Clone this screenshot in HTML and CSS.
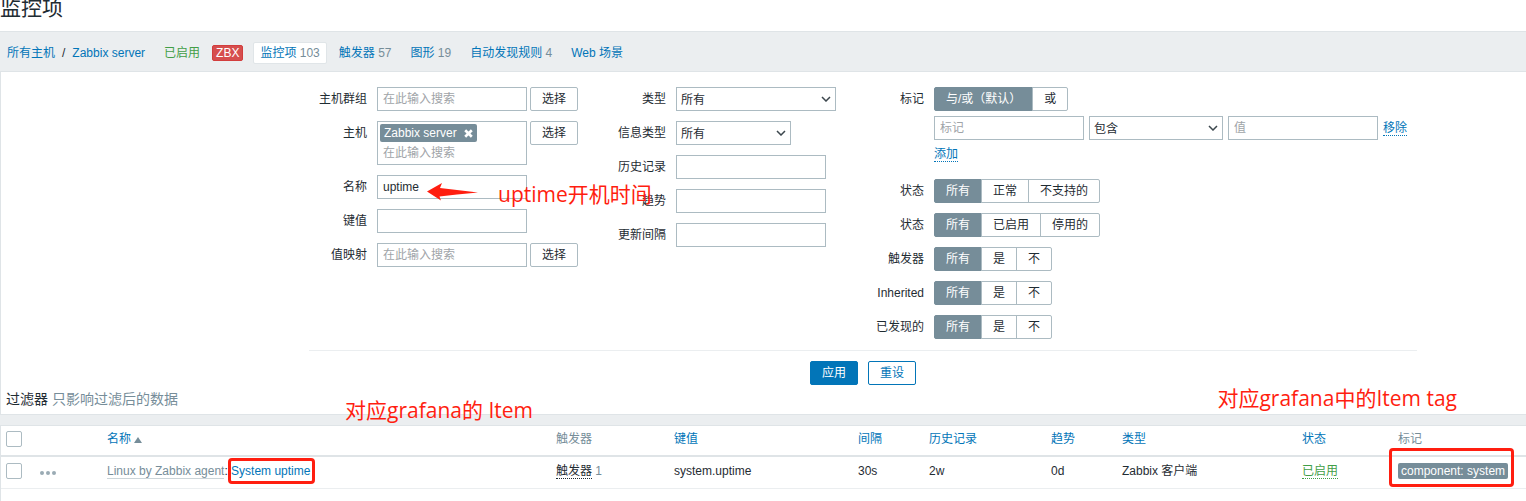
FILE: index.html
```html
<!DOCTYPE html>
<html lang="zh-CN">
<head>
<meta charset="utf-8">
<title>监控项</title>
<link rel="stylesheet" href="styles.css">
</head>
<body>
<header class="page-header"><h1>监控项</h1></header>

<nav class="host-nav">
  <a href="#">所有主机</a>
  <span class="slash">/</span>
  <a href="#">Zabbix server</a>
  <a href="#" class="enabled">已启用</a>
  <span class="zbx">ZBX</span>
  <div class="tabs">
    <a href="#" class="tab active">监控项 <span>103</span></a>
    <a href="#" class="tab">触发器 <span>57</span></a>
    <a href="#" class="tab">图形 <span>19</span></a>
    <a href="#" class="tab">自动发现规则 <span>4</span></a>
    <a href="#" class="tab">Web 场景</a>
  </div>
</nav>

<form class="filter">
  <div class="filter-form">
    <div class="filter-col">
      <div class="row"><label for="groups">主机群组</label>
        <div class="field"><input id="groups" class="text" placeholder="在此输入搜索"><button type="button" class="btn-grey">选择</button></div></div>
      <div class="row"><label for="hosts">主机</label>
        <div class="field"><div class="multiselect">
          <span class="chip">Zabbix server<button type="button" aria-label="移除"><svg viewBox="0 0 10 10"><path d="M2 2 8 8M8 2 2 8"/></svg></button></span>
          <input id="hosts" placeholder="在此输入搜索"></div><button type="button" class="btn-grey">选择</button></div></div>
      <div class="row"><label for="name">名称</label>
        <div class="field"><input id="name" class="text" value="uptime">
          <svg class="arrow" viewBox="0 0 52 18"><path d="M0 8.5 15 0 13 5 30 7 51 9.500 30 11.500 12.500 13.500 14 17.500Z"/></svg>
          <span class="note note-name">uptime开机时间</span></div></div>
      <div class="row"><label for="key">键值</label>
        <div class="field"><input id="key" class="text"></div></div>
      <div class="row"><label for="valuemap">值映射</label>
        <div class="field"><input id="valuemap" class="text" placeholder="在此输入搜索"><button type="button" class="btn-grey">选择</button></div></div>
    </div>

    <div class="filter-col">
      <div class="row"><label for="type">类型</label>
        <div class="field"><span class="select wide"><select id="type"><option>所有</option></select><svg viewBox="0 0 10 6"><path d="M1 1 5 5 9 1"/></svg></span></div></div>
      <div class="row"><label for="value-type">信息类型</label>
        <div class="field"><span class="select narrow"><select id="value-type"><option>所有</option></select><svg viewBox="0 0 10 6"><path d="M1 1 5 5 9 1"/></svg></span></div></div>
      <div class="row"><label for="history">历史记录</label>
        <div class="field"><input id="history" class="text"></div></div>
      <div class="row"><label for="trends">趋势</label>
        <div class="field"><input id="trends" class="text"></div></div>
      <div class="row"><label for="delay">更新间隔</label>
        <div class="field"><input id="delay" class="text"></div></div>
    </div>

    <div class="filter-col">
      <div class="row tags-row"><span class="label">标记</span>
        <div class="tag-filter">
          <div class="segments">
            <label><input type="radio" name="evaltype" checked><span>与/或（默认）</span></label><label><input type="radio" name="evaltype"><span>或</span></label>
          </div>
          <div class="tag-line">
            <input class="text" placeholder="标记" aria-label="标记">
            <span class="select medium"><select aria-label="运算符"><option>包含</option></select><svg viewBox="0 0 10 6"><path d="M1 1 5 5 9 1"/></svg></span>
            <input class="text" placeholder="值" aria-label="值">
            <a href="#" class="dotted">移除</a>
          </div>
          <div class="add-line"><a href="#" class="dotted">添加</a></div>
        </div></div>
      <div class="row"><span class="label">状态</span>
        <div class="segments">
          <label><input type="radio" name="state" checked><span>所有</span></label><label><input type="radio" name="state"><span>正常</span></label><label><input type="radio" name="state"><span>不支持的</span></label>
        </div></div>
      <div class="row"><span class="label">状态</span>
        <div class="segments">
          <label><input type="radio" name="status" checked><span>所有</span></label><label><input type="radio" name="status"><span>已启用</span></label><label><input type="radio" name="status"><span>停用的</span></label>
        </div></div>
      <div class="row"><span class="label">触发器</span>
        <div class="segments">
          <label><input type="radio" name="triggers" checked><span>所有</span></label><label><input type="radio" name="triggers"><span>是</span></label><label><input type="radio" name="triggers"><span>不</span></label>
        </div></div>
      <div class="row"><span class="label">Inherited</span>
        <div class="segments">
          <label><input type="radio" name="inherited" checked><span>所有</span></label><label><input type="radio" name="inherited"><span>是</span></label><label><input type="radio" name="inherited"><span>不</span></label>
        </div></div>
      <div class="row"><span class="label">已发现的</span>
        <div class="segments">
          <label><input type="radio" name="discovered" checked><span>所有</span></label><label><input type="radio" name="discovered"><span>是</span></label><label><input type="radio" name="discovered"><span>不</span></label>
        </div></div>
    </div>
  </div>
  <div class="filter-buttons">
    <button type="submit" class="btn primary">应用</button>
    <button type="reset" class="btn">重设</button>
  </div>
  <div class="subfilter">过滤器 <span>只影响过滤后的数据</span></div>
  <span class="note note-item">对应grafana的 Item</span>
  <span class="note note-tag">对应grafana中的Item tag</span>
</form>

<main class="items">
  <table>
    <colgroup><col class="c-check"><col class="c-menu"><col><col class="c-trig"><col class="c-key"><col class="c-int"><col class="c-hist"><col class="c-trend"><col class="c-type"><col class="c-status"><col class="c-tags"></colgroup>
    <thead>
      <tr>
        <th><input type="checkbox" aria-label="全选"></th>
        <th></th>
        <th><a href="#">名称<i class="sort"></i></a></th>
        <th>触发器</th>
        <th><a href="#">键值</a></th>
        <th><a href="#">间隔</a></th>
        <th><a href="#">历史记录</a></th>
        <th><a href="#">趋势</a></th>
        <th><a href="#">类型</a></th>
        <th><a href="#">状态</a></th>
        <th>标记</th>
      </tr>
    </thead>
    <tbody>
      <tr>
        <td><input type="checkbox" aria-label="System uptime"></td>
        <td><button type="button" class="dots" aria-label="菜单"><svg viewBox="0 0 16 4"><circle cx="2" cy="2" r="2"/><circle cx="8" cy="2" r="2"/><circle cx="14" cy="2" r="2"/></svg></button></td>
        <td><a href="#" class="template">Linux by Zabbix agent</a><span class="colon">: </span><a href="#" class="marked">System uptime</a></td>
        <td><a href="#" class="dotted dark">触发器</a> <span class="count">1</span></td>
        <td>system.uptime</td>
        <td>30s</td>
        <td>2w</td>
        <td>0d</td>
        <td>Zabbix 客户端</td>
        <td><a href="#" class="dotted green">已启用</a></td>
        <td><span class="tag marked">component: system</span></td>
      </tr>
    </tbody>
  </table>
</main>
</body>
</html>
```
FILE: styles.css
```css
* { box-sizing: border-box; }

body {
  margin: 0;
  min-height: 100vh;
  display: flex;
  flex-direction: column;
  overflow: hidden;
  background: #ebeef0;
  color: #1f2c33;
  font: 12px/18px "Liberation Sans", "Noto Sans CJK SC", sans-serif;
}

a { color: #0275b8; text-decoration: none; }

button, input, select { font: inherit; color: inherit; margin: 0; }

.page-header { background: #fff; height: 31px; }

h1 {
  margin: 0;
  font-size: 21px;
  line-height: 16px;
  font-weight: 400;
}

/* Host navigation */
.host-nav {
  display: flex;
  align-items: center;
  height: 41px;
  padding: 2px 7px 0;
  border-top: 1px solid #dfe4e7;
  border-bottom: 1px solid #dfe4e7;
}

.slash { margin: 0 7px; }
.enabled { margin: 0 12px 0 19px; color: #429e47; }

.zbx {
  padding: 0 3px;
  border: 1px solid #d23d3d;
  border-radius: 2px;
  background: #d64e4e;
  color: #fff;
  line-height: 14px;
}

.tabs { display: flex; gap: 5px; margin-left: 10px; }
.tab { padding: 2px 7px; border-radius: 2px; }
.tab span { color: #768d99; }
.tab.active { background: #fff; border: 1px solid #e0e5e8; padding: 1px 6px; }

/* Filter */
.filter {
  position: relative;
  background: #fff;
  border: 1px solid #dfe4e7;
  border-width: 0 0 1px 1px;
}

.filter-form {
  display: grid;
  grid-template-columns: 299px 258px 1fr;
  max-width: 1108px;
  margin-left: 308px;
  padding: 15px 0 11px;
  border-bottom: 1px solid #ebeef0;
}

.filter-col { display: flex; flex-direction: column; gap: 10px; }

.row {
  display: grid;
  grid-template-columns: 58px 1fr;
  column-gap: 10px;
  align-items: start;
}

.row > label, .label { line-height: 24px; text-align: right; white-space: nowrap; }

.field { display: flex; align-items: flex-start; gap: 3px; position: relative; }

.text {
  width: 150px;
  height: 24px;
  padding: 0 5px;
  border: 1px solid #acbbc2;
  background: #fff;
}

::placeholder { color: #a0a4a8; opacity: 1; }

.btn-grey {
  width: 48px;
  height: 24px;
  padding: 0;
  border: 1px solid #acbbc2;
  border-radius: 2px;
  background: #fff;
}

.multiselect {
  width: 150px;
  height: 44px;
  padding: 2px;
  border: 1px solid #acbbc2;
}

.multiselect input {
  display: block;
  width: 100%;
  height: 20px;
  padding: 2px 3px 0;
  border: 0;
}

.chip {
  display: flex;
  align-items: center;
  width: max-content;
  height: 18px;
  padding: 0 3px 0 4px;
  border-radius: 2px;
  background: #768d99;
  color: #fff;
}

.chip button {
  display: flex;
  margin-left: 6px;
  padding: 0;
  border: 0;
  background: none;
}

.chip svg { width: 11px; height: 11px; stroke: #fff; stroke-width: 2.4; }

.select { position: relative; display: block; }
.select.wide { width: 160px; }
.select.narrow { width: 115px; }
.select.medium { width: 134px; }

.select select {
  appearance: none;
  width: 100%;
  height: 24px;
  padding: 1px 4px 0;
  border: 1px solid #acbbc2;
  border-radius: 0;
  background: #fff;
}

.select svg {
  position: absolute;
  right: 5px;
  top: 9px;
  width: 10px;
  height: 6px;
  fill: none;
  stroke: #3c474d;
  stroke-width: 1.5;
  pointer-events: none;
}

.segments { display: flex; }
.segments label { position: relative; }
.segments label + label { margin-left: -1px; }
.segments input { position: absolute; opacity: 0; }

.segments span {
  display: block;
  padding: 0 11px;
  border: 1px solid #acbbc2;
  line-height: 22px;
  white-space: nowrap;
}

.segments label:first-child span { border-radius: 2px 0 0 2px; }
.segments label:last-child span { border-radius: 0 2px 2px 0; }

.segments input:checked + span {
  position: relative;
  background: #768d99;
  border-color: #768d99;
  color: #fff;
}

.tag-line { display: flex; align-items: center; gap: 5px; margin-top: 5px; }
.add-line { padding-top: 6px; line-height: 16px; }
.tags-row { margin-bottom: 7px; }

.dotted {
  border-bottom: 1px dotted #0275b8;
  line-height: 14px;
}
.dotted.dark { color: #1f2c33; border-color: #1f2c33; }
.dotted.green { color: #429e47; border-color: #429e47; }

.filter-buttons {
  display: flex;
  justify-content: center;
  gap: 10px;
  max-width: 1108px;
  margin-left: 308px;
  padding-top: 10px;
}

.btn {
  width: 48px;
  height: 24px;
  padding: 0;
  border: 1px solid #0275b8;
  border-radius: 2px;
  background: #fff;
  color: #0275b8;
}
.btn.primary { background: #0275b8; color: #fff; }

.subfilter {
  padding: 4px 5px 5px;
  font-size: 14px;
  line-height: 20px;
}
.subfilter span { color: #768d99; }

/* Red annotations */
.note {
  position: absolute;
  color: #ff1e10;
  font: 21px/28px "Open Sans", "Noto Sans CJK SC", sans-serif;
  white-space: nowrap;
}
.note-name { left: 121px; top: 5px; z-index: 1; }
.note-item { left: 344px; bottom: -10px; }
.note-tag { right: 69px; bottom: 2px; }

.arrow {
  position: absolute;
  left: 50px;
  top: 8px;
  width: 52px;
  height: 18px;
  fill: #ff1e10;
}

.marked { position: relative; }
.marked::after {
  content: "";
  position: absolute;
  inset: -6px -5px -6px -3px;
  border: 3px solid #ff1e10;
  border-radius: 4px;
  pointer-events: none;
}

/* Item table */
.items {
  flex: 1;
  margin-top: 10px;
  border: 1px solid #dfe4e7;
  border-width: 1px 0 0 1px;
  background: #fff;
}

table { width: 100%; table-layout: fixed; border-collapse: separate; border-spacing: 0; }
.c-check { width: 34px; }
.c-menu { width: 67px; }
.c-trig { width: 118px; }
.c-key { width: 184px; }
.c-int { width: 71px; }
.c-hist { width: 122px; }
.c-trend { width: 71px; }
.c-type { width: 180px; }
.c-status { width: 96px; }
.c-tags { width: 133px; }

th, td {
  padding: 0 5px 3px;
  text-align: left;
  vertical-align: middle;
  white-space: nowrap;
  font-weight: 400;
}
th { height: 31px; color: #768d99; border-bottom: 2px solid #dfe4e7; }
td { height: 32px; border-bottom: 1px solid #ebeef0; }

input[type="checkbox"] {
  appearance: none;
  display: block;
  width: 16px;
  height: 16px;
  border: 1px solid #acbbc2;
  border-radius: 2px;
  background: #fff;
}

.sort {
  display: inline-block;
  margin-left: 3px;
  border: 4px solid transparent;
  border-top: 0;
  border-bottom: 6px solid #768d99;
}

.dots { display: block; padding: 4px 0 0; border: 0; background: none; }
.dots svg { display: block; width: 16px; height: 4px; fill: #9aabb4; }

.template { color: #768d99; border-bottom: 1px solid #ccd5d9; }
.count { color: #768d99; }

.tag {
  display: inline-block;
  padding: 0 3px;
  border-radius: 2px;
  background: #768d99;
  color: #fff;
  line-height: 16px;
}
.tag.marked::after { inset: -15px -6px -8px -9px; }
```
